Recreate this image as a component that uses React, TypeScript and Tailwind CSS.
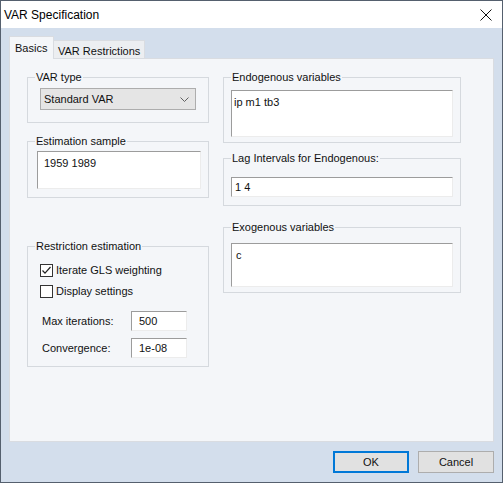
import React from 'react';

const Group = ({
  label,
  className = '',
  inner = '',
  children,
}: {
  label: string;
  className?: string;
  inner?: string;
  children: React.ReactNode;
}) => (
  <fieldset className={`border border-[#d5d9de] ${className}`}>
    <legend className="ml-[7px] px-[1px] leading-[14px]">{label}</legend>
    <div className={inner}>{children}</div>
  </fieldset>
);

const Field = ({ value, className = '' }: { value: string; className?: string }) => (
  <div
    className={`bg-white border-t border-l border-[#9c9c9c] border-r border-b border-r-[#ececec] border-b-[#ececec] ${className}`}
  >
    {value}
  </div>
);

const CheckBox = ({ checked, label }: { checked?: boolean; label: string }) => (
  <div className="flex items-center h-[16px] gap-[3px]">
    <div className="w-[13px] h-[13px] bg-white border border-[#333] flex items-center justify-center">
      {checked && (
        <svg width="11" height="11" viewBox="0 0 11 11">
          <polyline points="1.5,5.5 4,8.2 9.5,2" fill="none" stroke="#222" strokeWidth="1.2" />
        </svg>
      )}
    </div>
    <span>{label}</span>
  </div>
);

export default function App() {
  return (
    <div className="w-[503px] h-[483px] flex flex-col border border-[#55606e] bg-[#d3deec] text-[11px] text-[#111] font-['Liberation_Sans',Arial,sans-serif]">
      {/* title bar */}
      <div className="h-[27px] bg-white flex items-center justify-between pl-[3px] pr-[10px] text-[12px] text-black">
        <span>VAR Specification</span>
        <svg width="12" height="12" viewBox="0 0 12 12">
          <line x1="0.5" y1="0.5" x2="11.5" y2="11.5" stroke="#111" strokeWidth="1" />
          <line x1="11.5" y1="0.5" x2="0.5" y2="11.5" stroke="#111" strokeWidth="1" />
        </svg>
      </div>

      <div className="flex-1 flex flex-col px-[8px] pt-[8px]">
        {/* tabs */}
        <div className="flex items-end h-[22px]">
          <div className="relative z-10 -mb-px h-[23px] w-[45px] bg-[#f4f6f9] border border-b-0 border-[#d9dce1] pl-[5px] pt-[3px]">
            Basics
          </div>
          <div className="h-[18px] bg-[#eceef1] border border-l-0 border-b-0 border-[#d9dce1] px-[4px] pt-[2px]">
            VAR Restrictions
          </div>
        </div>

        {/* panel */}
        <div className="h-[384px] bg-[#f4f6f9] border border-[#d9dce1] flex gap-[14px] pt-[11px] pl-[17px]">
          <div className="w-[182px] flex flex-col">
            <Group label="VAR type" inner="pl-[12px] pb-[12px]">
              <div className="mt-[4px] w-[156px] h-[22px] bg-[#e5e5e5] border border-[#adadad] flex items-center justify-between pl-[3px] pr-[6px]">
                <span>Standard VAR</span>
                <svg width="9" height="5" viewBox="0 0 9 5">
                  <polyline points="0.5,0.5 4.5,4.5 8.5,0.5" fill="none" stroke="#606060" strokeWidth="1" />
                </svg>
              </div>
            </Group>

            <Group label="Estimation sample" className="mt-[11px]" inner="pl-[9px] pb-[8px]">
              <Field value="1959 1989" className="mt-[3px] w-[164px] h-[38px] pl-[6px] pt-[3px]" />
            </Group>

            <Group label="Restriction estimation" className="mt-[41px]" inner="pl-[12px] pb-[8px]">
              <div className="mt-[9px]">
                <CheckBox checked label="Iterate GLS weighting" />
              </div>
              <div className="mt-[5px]">
                <CheckBox label="Display settings" />
              </div>
              <div className="mt-[12px] flex items-center">
                <span className="ml-[2px] w-[89px]">Max iterations:</span>
                <Field value="500" className="w-[56px] h-[20px] pl-[7px] flex items-center" />
              </div>
              <div className="mt-[7px] flex items-center">
                <span className="ml-[2px] w-[89px]">Convergence:</span>
                <Field value="1e-08" className="w-[56px] h-[20px] pl-[7px] flex items-center" />
              </div>
            </Group>
          </div>

          <div className="w-[238px] flex flex-col">
            <Group label="Endogenous variables" inner="pl-[7px] pb-[5px]">
              <Field value="ip m1 tb3" className="mt-[6px] w-[222px] h-[47px] pl-[2px] pt-[3px]" />
            </Group>

            <Group label="Lag Intervals for Endogenous:" className="mt-[8px]" inner="pl-[7px] pb-[8px]">
              <Field value="1 4" className="mt-[12px] w-[222px] h-[20px] pl-[3px] flex items-center" />
            </Group>

            <Group label="Exogenous variables" className="mt-[14px]" inner="pl-[7px] pb-[5px]">
              <Field value="c" className="mt-[9px] w-[222px] h-[44px] pl-[4px] pt-[3px]" />
            </Group>
          </div>
        </div>

        {/* buttons */}
        <div className="flex justify-end gap-[9px] mt-[9px]">
          <button className="w-[76px] h-[22px] bg-[#e1e1e1] border-2 border-[#0078d7]">OK</button>
          <button className="w-[76px] h-[22px] bg-[#e1e1e1] border border-[#adadad]">Cancel</button>
        </div>
      </div>
    </div>
  );
}
